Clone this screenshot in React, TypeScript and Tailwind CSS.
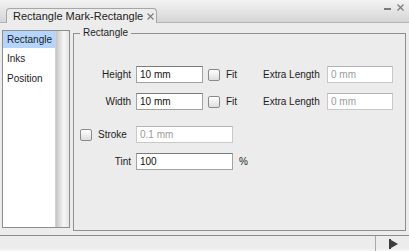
import React from "react";

function Field({ value, width, disabled }: { value: string; width: string; disabled?: boolean }) {
  return (
    <div
      className={`h-[17px] ${width} bg-white border flex items-center pl-[3px] ${
        disabled
          ? "border-[#c8c8c8] border-t-[#b3b3b3] text-[#9c9c9c]"
          : "border-[#a3a3a3] border-t-[#7c7c7c] text-[#111]"
      }`}
    >
      {value}
    </div>
  );
}

function Check() {
  return (
    <div className="w-[12px] h-[12px] rounded-[2px] border border-[#8a8a8a] bg-[linear-gradient(to_bottom,#ffffff,#dedede)] shrink-0" />
  );
}

export default function App() {
  return (
    <div className="w-[409px] h-[251px] bg-[#ececec] flex flex-col overflow-hidden font-['Liberation_Sans',Arial,sans-serif] text-[10px] text-[#1c1c1c]">
      {/* tab bar */}
      <div className="h-[23px] shrink-0 flex items-end pl-[6px] border-b border-[#b4b4b4] bg-[linear-gradient(to_bottom,#f3f3f3,#d5d5d5)]">
        <div className="h-[15px] -mb-px bg-[#ececec] border border-b-0 border-[#a6a6a6] rounded-t-[4px] flex items-center pl-[6px] pr-[2px] text-[11px] text-[#222]">
          <span>Rectangle Mark-Rectangle</span>
          <svg width="7" height="7" viewBox="0 0 7 7" className="ml-[4px] mt-px">
            <path d="M0.5 0.5L6.5 6.5M6.5 0.5L0.5 6.5" stroke="#7a7a7a" strokeWidth="1.1" />
          </svg>
        </div>
        <div className="ml-auto self-start flex items-center gap-[6px] pt-[4px] pr-[5px]">
          <div className="w-[7px] h-[2px] bg-[#7a7a7a] mt-[2px]" />
          <svg width="7" height="7" viewBox="0 0 7 7">
            <path d="M0.5 0.5L6.5 6.5M6.5 0.5L0.5 6.5" stroke="#7a7a7a" strokeWidth="1.2" />
          </svg>
        </div>
      </div>

      {/* body */}
      <div className="h-[212px] shrink-0 flex">
        <div className="ml-[2px] mt-[7px] h-[198px] w-[68px] border border-[#8e8e8e] flex">
          <div className="w-[52px] bg-white flex flex-col">
            <div className="h-[17px] bg-[#b5d5ff] flex items-center pl-[4px]">Rectangle</div>
            <div className="h-[20px] flex items-center pl-[4px]">Inks</div>
            <div className="h-[20px] flex items-center pl-[4px]">Position</div>
          </div>
          <div className="flex-1 border-l border-[#d0d0d0] bg-[linear-gradient(to_right,#c6c6c6,#f6f6f6_60%,#e4e4e4)]" />
        </div>

        <fieldset className="ml-[3px] mt-[4px] h-[204px] w-[333px] border border-[#8f8f8f]">
          <legend className="ml-[6px] px-[3px] leading-[12px]">Rectangle</legend>
          <div className="flex flex-col pt-[27px]">
            <div className="flex items-center">
              <span className="w-[57px] text-right">Height</span>
              <div className="ml-[5px]">
                <Field value="10 mm" width="w-[67px]" />
              </div>
              <div className="ml-[5px]">
                <Check />
              </div>
              <span className="ml-[6px] w-[37px]">Fit</span>
              <span className="w-[64px]">Extra Length</span>
              <Field value="0 mm" width="w-[66px]" disabled />
            </div>
            <div className="flex items-center mt-[10px]">
              <span className="w-[57px] text-right">Width</span>
              <div className="ml-[5px]">
                <Field value="10 mm" width="w-[67px]" />
              </div>
              <div className="ml-[5px]">
                <Check />
              </div>
              <span className="ml-[6px] w-[37px]">Fit</span>
              <span className="w-[64px]">Extra Length</span>
              <Field value="0 mm" width="w-[66px]" disabled />
            </div>
            <div className="flex items-center mt-[16px] pl-[6px]">
              <Check />
              <span className="ml-[6px] w-[38px]">Stroke</span>
              <Field value="0.1 mm" width="w-[97px]" disabled />
            </div>
            <div className="flex items-center mt-[10px]">
              <span className="w-[57px] text-right">Tint</span>
              <div className="ml-[5px]">
                <Field value="100" width="w-[97px]" />
              </div>
              <span className="ml-[6px]">%</span>
            </div>
          </div>
        </fieldset>
      </div>

      {/* status bar */}
      <div className="flex-1 flex justify-end border-t border-[#8c8c8c] bg-[linear-gradient(to_bottom,#ececec_80%,#f6f6f6)]">
        <div className="w-[34px] border-l border-[#a8a8a8] flex items-center justify-center pl-[2px]">
          <svg width="10" height="10" viewBox="0 0 10 10">
            <rect x="0" y="0" width="2" height="10" fill="#3c3c3c" />
            <path d="M2 1L9 5L2 9Z" fill="#3c3c3c" />
          </svg>
        </div>
      </div>
    </div>
  );
}
